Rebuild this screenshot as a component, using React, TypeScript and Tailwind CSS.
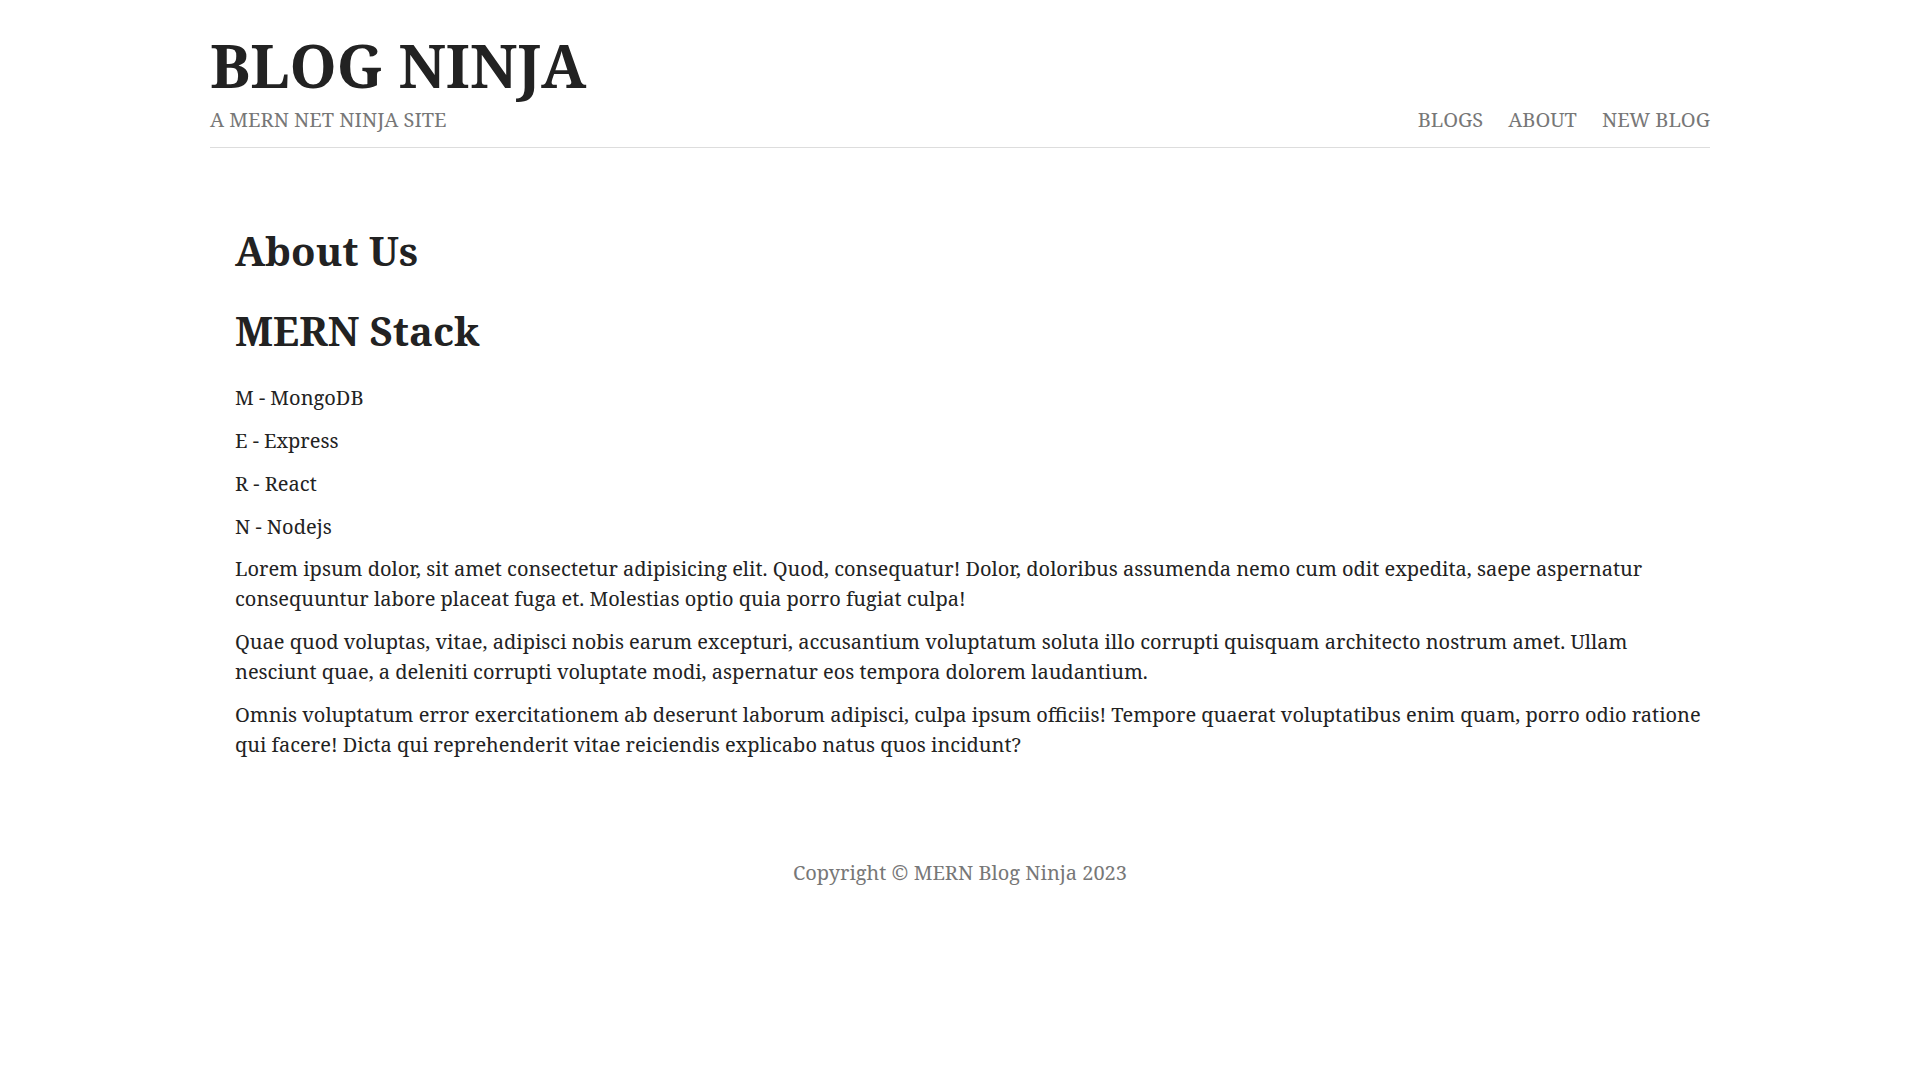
const serif = { fontFamily: '"Noto Serif", "DejaVu Serif", "Liberation Serif", serif' };

function Header() {
  return (
    <header className="mx-auto flex max-w-[1500px] items-end justify-between border-b border-[#dddddd] pt-[33px] pb-[12px]">
      <div>
        <h1 className="text-[60px] leading-[64px] font-bold text-[#222222]">BLOG NINJA</h1>
        <p className="mt-[8px] text-[20px] leading-[30px] text-[#777777]">A MERN NET NINJA SITE</p>
      </div>
      <nav className="flex gap-[25px] text-[20px] leading-[30px] text-[#777777]">
        <a href="#">BLOGS</a>
        <a href="#">ABOUT</a>
        <a href="#">NEW BLOG</a>
      </nav>
    </header>
  );
}

function About() {
  return (
    <main className="mx-auto max-w-[1500px] pl-[25px] pt-[79px] text-[#222222]">
      <h2 className="text-[40px] leading-[48px] font-bold">About Us</h2>
      <h2 className="mt-[32px] text-[40px] leading-[48px] font-bold">MERN Stack</h2>
      <div className="mt-[28px] text-[20px] leading-[30px]">
        <p className="mb-[13px]">M - MongoDB</p>
        <p className="mb-[13px]">E - Express</p>
        <p className="mb-[13px]">R - React</p>
        <p className="mb-[12px]">N - Nodejs</p>
        <p className="mb-[13px]">
          Lorem ipsum dolor, sit amet consectetur adipisicing elit. Quod, consequatur! Dolor, doloribus assumenda nemo
          cum odit expedita, saepe aspernatur consequuntur labore placeat fuga et. Molestias optio quia porro fugiat
          culpa!
        </p>
        <p className="mb-[13px]">
          Quae quod voluptas, vitae, adipisci nobis earum excepturi, accusantium voluptatum soluta illo corrupti
          quisquam architecto nostrum amet. Ullam nesciunt quae, a deleniti corrupti voluptate modi, aspernatur eos
          tempora dolorem laudantium.
        </p>
        <p>
          Omnis voluptatum error exercitationem ab deserunt laborum adipisci, culpa ipsum officiis! Tempore quaerat
          voluptatibus enim quam, porro odio ratione qui facere! Dicta qui reprehenderit vitae reiciendis explicabo
          natus quos incidunt?
        </p>
      </div>
    </main>
  );
}

export default function App() {
  return (
    <div className="min-h-screen bg-white" style={serif}>
      <Header />
      <About />
      <footer className="pt-[98px] text-center text-[20px] leading-[30px] text-[#777777]">
        Copyright © MERN Blog Ninja 2023
      </footer>
    </div>
  );
}
